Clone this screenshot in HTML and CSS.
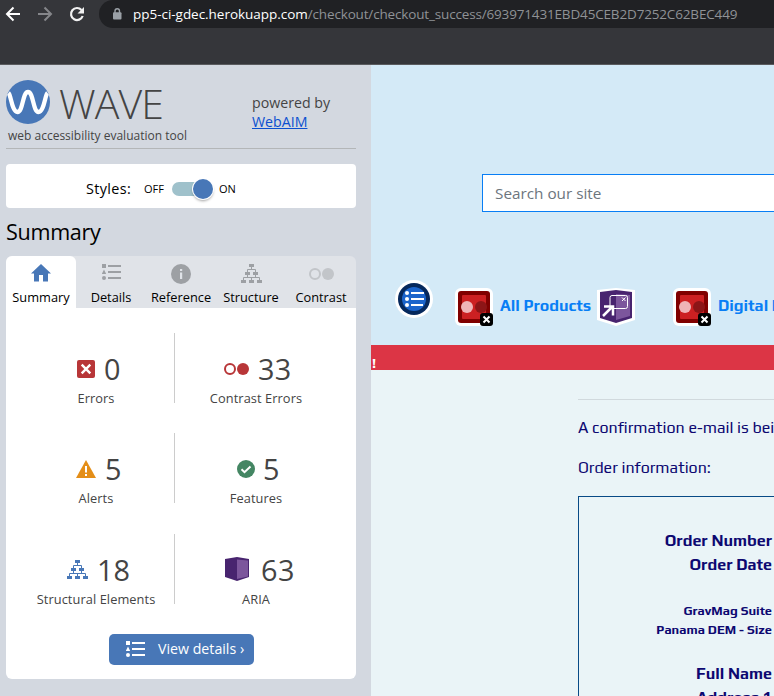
FILE: index.html
```html
<!DOCTYPE html>
<html lang="en">
<head>
<meta charset="utf-8">
<title>Checkout success - WAVE</title>
<link rel="stylesheet" href="styles.css">
</head>
<body>
<svg class="defs" aria-hidden="true">
  <defs>
    <symbol id="tree" viewBox="0 0 21 19">
      <path fill="currentColor" d="M8 0h5v3H8zM4 8h5v3H4zM12 8h5v3h-5zM0 16h5v3H0zM8 16h5v3H8zM16 16h5v3h-5z"/>
      <path fill="none" stroke="currentColor" d="M10.500 3v2.500M6.500 8V5.500h8V8M6.500 11v2.500M14.500 11v2.500M2.500 16v-2.500h16V16M10.500 13.500V16"/>
    </symbol>
    <symbol id="list" viewBox="0 0 19 16">
      <path fill="currentColor" d="M0 0h4v4H0zM2 5.500l2.200 4.500h-4.400zM6 1h13v2H6zM6 7h13v2H6zM6 13h13v2H6z"/>
      <circle cx="2" cy="14" r="2" fill="currentColor"/>
    </symbol>
    <symbol id="contrast" viewBox="0 0 26 12">
      <circle cx="6" cy="6" r="5" fill="none" stroke="currentColor" stroke-width="2"/>
      <circle cx="19" cy="6" r="6" fill="currentColor"/>
    </symbol>
    <symbol id="contrast-flag" viewBox="0 0 38 38">
      <rect width="38" height="38" rx="6" fill="#fff"/>
      <rect x="3" y="3" width="32" height="32" rx="3" fill="#800000"/>
      <rect x="7" y="7" width="24" height="24" rx="1" fill="#cc2022"/>
      <circle cx="12" cy="19" r="6" fill="#efb4b7"/>
      <circle cx="26" cy="19" r="6" fill="#8c1517"/>
      <rect x="25" y="25" width="13" height="13" rx="3" fill="#000"/>
      <path d="M28.500 28.500l6 6M34.500 28.500l-6 6" stroke="#fff" stroke-width="2"/>
    </symbol>
  </defs>
</svg>
<header class="toolbar">
  <svg class="nav" viewBox="0 0 100 28" fill="none" stroke-width="2">
    <path stroke="#fff" d="M20 14H7.500M13.500 7.500L7 14l6.500 6.500"/>
    <path stroke="#85868a" d="M38 14h12.500M44.500 7.500L51 14l-6.500 6.500"/>
    <path stroke="#f1f1f1" stroke-width="2.200" d="M81.500 10A6 6 0 1 0 82.700 16"/>
    <path fill="#f1f1f1" d="M84 7v6.500h-6.500z"/>
  </svg>
  <div class="address">
    <svg class="lock" viewBox="0 0 10 12"><rect x="1" y="4.200" width="8.500" height="7.300" rx="1" fill="#9aa0a6"/><path d="M3 5V3a2.200 2.200 0 0 1 4.500 0v2" fill="none" stroke="#9aa0a6" stroke-width="1.400"/></svg>
    <span class="host">pp5-ci-gdec.herokuapp.com</span><span class="path">/checkout/checkout_success/693971431EBD45CEB2D7252C62BEC449</span>
  </div>
</header>
<div class="window">
  <aside class="wave">
    <div class="brand">
      <div class="brand-main">
        <div class="logo">
          <svg width="44" height="44" viewBox="0 0 44 44"><circle cx="22" cy="22" r="22" fill="#4877b7"/><path d="M2.500 13C5 15 6 32 11.500 32C17 32 16.500 12 22 12S27 32 32.500 32C38 32 39 15 41.500 13" fill="none" stroke="#fff" stroke-width="4.300"/></svg>
          <span class="logo-text">WAVE</span>
        </div>
        <div class="tagline">web accessibility evaluation tool</div>
      </div>
      <div class="powered">powered by<br><a>WebAIM</a></div>
    </div>
    <div class="styles-card">
      <span class="styles-label">Styles:</span><span class="off">OFF</span><span class="track"><span class="knob"></span></span><span class="on">ON</span>
    </div>
    <h2>Summary</h2>
    <nav class="tabs">
      <div class="tab active"><svg width="20" height="18" viewBox="0 0 20 18"><path fill="currentColor" d="M10 0l10 9.500h-3V17.500h-5V11H8v6.500H3v-8H0z"/></svg><span>Summary</span></div>
      <div class="tab"><svg width="19" height="16"><use href="#list"/></svg><span>Details</span></div>
      <div class="tab ref"><svg width="20" height="20" viewBox="0 0 20 20"><circle cx="10" cy="10" r="10" fill="currentColor"/><path fill="#e0e3e8" d="M9 5h2.200v2H9zM9 8.500h2.200V15H9z"/></svg><span>Reference</span></div>
      <div class="tab"><svg width="21" height="19"><use href="#tree"/></svg><span>Structure</span></div>
      <div class="tab pale"><svg width="26" height="12"><use href="#contrast"/></svg><span>Contrast</span></div>
    </nav>
    <section class="panel">
      <div class="counts">
        <div class="count left"><div class="num"><svg class="i-error" width="18" height="18" viewBox="0 0 18 18"><rect width="18" height="18" rx="2" fill="#b83638"/><path d="M4.700 4.700l8.600 8.600M13.300 4.700l-8.600 8.600" stroke="#fff" stroke-width="2.400"/></svg><span>0</span></div><div class="label">Errors</div></div>
        <div class="count right"><div class="num"><svg class="red" width="26" height="12"><use href="#contrast"/></svg><span>33</span></div><div class="label">Contrast Errors</div></div>
        <div class="count left"><div class="num"><svg class="i-alert" width="20" height="18" viewBox="0 0 20 18"><path fill="#e48e18" d="M10 0l10 18H0z"/><path d="M9 6h2v6.500H9zM9 14h2v2H9z" fill="#fff"/></svg><span>5</span></div><div class="label">Alerts</div></div>
        <div class="count right"><div class="num"><svg class="i-feature" width="18" height="18" viewBox="0 0 18 18"><circle cx="9" cy="9" r="9" fill="#448663"/><path d="M4.500 9.300l3 2.900 6-5.700" fill="none" stroke="#fff" stroke-width="2"/></svg><span>5</span></div><div class="label">Features</div></div>
        <div class="count left"><div class="num"><svg class="blue" width="21" height="19"><use href="#tree"/></svg><span>18</span></div><div class="label">Structural Elements</div></div>
        <div class="count right"><div class="num"><svg class="i-aria" width="24" height="24" viewBox="0 0 24 24"><path fill="#48246f" d="M0 2L12 0l12 2v18l-12 4-12-4z"/><path fill="#7c569c" d="M12 2.500L23 3.500v16L12 22z"/></svg><span>63</span></div><div class="label">ARIA</div></div>
      </div>
      <div class="details-button"><svg width="19" height="16"><use href="#list"/></svg><span>View details ›</span></div>
    </section>
  </aside>
  <main class="site">
    <div class="masthead">
      <div class="search">Search our site</div>
      <div class="menu">
        <svg class="list-flag" width="38" height="38" viewBox="0 0 38 38"><circle cx="19" cy="19" r="19" fill="#fff"/><circle cx="19" cy="19" r="16" fill="#05285c"/><circle cx="19" cy="19" r="12" fill="#1b64cb"/><g fill="#fff"><circle cx="12" cy="13" r="2"/><circle cx="12" cy="19" r="2"/><circle cx="12" cy="25" r="2"/><path d="M16 12h13v2H16zM16 18h13v2H16zM16 24h12v2H16z"/></g></svg>
        <svg class="flag" width="38" height="38"><use href="#contrast-flag"/></svg>
        <span class="menu-link products">All Products</span>
        <svg class="aria-flag" width="38" height="38" viewBox="0 0 38 38"><path fill="#fff" d="M0 2L19 0l19 2v30l-19 6-19-6z"/><path fill="#48246f" d="M3 4l16-2 16 2v26l-16 5-16-5z"/><path fill="#7c569c" d="M19 6l14 1v21l-14 4z"/><rect x="13" y="7.500" width="17.500" height="13" rx="2" fill="none" stroke="#fff"/><path fill="none" stroke="#fff" d="M25 9.500l3.500 3.500M28.500 9.500L25 13"/><path fill="none" stroke="#fff" stroke-width="2.500" d="M6 28l9-9M7 18.500h9v9"/></svg>
        <svg class="flag second" width="38" height="38"><use href="#contrast-flag"/></svg>
        <span class="menu-link digital">Digital Products</span>
      </div>
    </div>
    <div class="banner">!</div>
    <div class="content">
      <hr>
      <p class="confirm">A confirmation e-mail is being sent</p>
      <p class="info">Order information:</p>
      <div class="order">
        <div class="row">Order Number</div>
        <div class="row">Order Date</div>
        <div class="row small first">GravMag Suite</div>
        <div class="row small">Panama DEM - Size</div>
        <div class="row name">Full Name</div>
        <div class="row">Address 1</div>
      </div>
    </div>
  </main>
</div>
</body>
</html>
```

FILE: styles.css
```css
* { box-sizing: border-box; }
body { margin: 0; width: 774px; height: 696px; overflow: hidden; font-family: "Open Sans", sans-serif; background: #d3d8e0; }
svg { display: block; flex: none; }
.defs { position: absolute; width: 0; height: 0; }

.toolbar { height: 65px; background: #35363a; border-bottom: 1px solid #5a5b5e; display: flex; align-items: flex-start; }
.nav { width: 100px; height: 28px; }
.address { flex: 1; margin-left: -1px; height: 28px; background: #202124; border-radius: 14px 0 0 14px; display: flex; align-items: center; font-size: 13.500px; color: #8f9296; white-space: nowrap; padding-left: 13px; }
.lock { width: 10px; height: 12px; margin-right: 11px; }
.host { color: #fff; letter-spacing: -0.030px; }
.path { letter-spacing: -0.160px; }

.window { display: flex; height: 631px; }
.wave { width: 371px; flex: none; padding: 15px 15px 0 6px; color: #444; }
.brand { height: 69px; border-bottom: 1px solid #b3b6b8; display: flex; }
.brand-main { width: 246px; }
.logo { display: flex; height: 44px; }
.logo-text { font-size: 41px; font-weight: 300; line-height: 44px; margin-left: 9px; padding-top: 1px; letter-spacing: -0.900px; }
.tagline { font-size: 12px; line-height: 16px; margin: 4px 0 0 2px; white-space: nowrap; }
.powered { font-size: 14.200px; line-height: 19px; padding-top: 13px; white-space: nowrap; }
.powered a { color: #0b50d0; text-decoration: underline; }
.styles-card { margin-top: 15px; height: 44px; border-radius: 4px; background: #fff; color: #000; display: flex; align-items: center; padding: 5px 0 0 80px; font-size: 11px; }
.styles-label { font-size: 14.400px; width: 58px; letter-spacing: 0.350px; }
.off { width: 28px; }
.track { width: 41px; height: 14px; border-radius: 7px; background: #9fc1cb; display: flex; justify-content: flex-end; align-items: center; }
.knob { width: 20px; height: 20px; flex: none; border-radius: 50%; background: #4877b7; box-shadow: 0 0 0 1px #fff, 0 2px 3px #0006; }
.on { margin-left: 6px; }
h2 { margin: 8px 0 0; color: #000; font-size: 21.600px; font-weight: 400; line-height: 32px; height: 40px; letter-spacing: -0.300px; }
.tabs { height: 52px; background: #e0e3e8; border-radius: 6px 6px 0 0; display: flex; }
.tab { width: 70px; height: 52px; color: #9da0a4; display: flex; flex-direction: column; align-items: center; padding-top: 8px; border-radius: 6px 6px 0 0; }
.tab span { color: #000; font-size: 12.800px; line-height: 18px; margin-top: auto; margin-bottom: 2px; }
.tab.active { background: #fff; color: #4877b7; }
.tab.pale { color: #c2c5c9; padding-top: 12px; }
.tab.pale svg { margin-left: 2px; }
.panel { height: 371px; background: #fff; border-radius: 0 0 6px 6px; padding-top: 25px; }
.counts { display: grid; grid-template-columns: 169px 1fr; grid-auto-rows: 70px; row-gap: 30.300px; }
.count { padding-top: 19px; text-align: center; }
.count.left { border-right: 1px solid #ccc; }
.count.left .label { width: 180px; }
.count.right .label { width: 162px; }
.num { display: flex; align-items: center; height: 34px; font-size: 28.800px; line-height: 34px; }
.num span { margin-left: 9px; }
.label { font-size: 12.800px; line-height: 18px; margin-top: 3px; letter-spacing: 0.080px; }
.i-error { margin-left: 71px; }
.i-alert { margin-left: 70px; }
.blue { margin-left: 61px; color: #4877b7; }
.red { margin-left: 49px; color: #b83638; }
.num .red + span { margin-left: 8px; letter-spacing: 0.300px; }
.i-feature { margin-left: 62px; }
.num .i-feature + span { margin-left: 8px; }
.i-aria { margin-left: 50px; margin-top: -2px; }
.num .i-aria + span { margin-left: 12px; letter-spacing: 0.500px; }
.details-button { width: 145px; height: 31px; margin: 30px 0 0 103px; border-radius: 5px; background: #4877b7; color: #fff; display: flex; align-items: center; padding-left: 17px; font-size: 14.200px; white-space: nowrap; }
.details-button span { margin-left: 13px; margin-top: -2px; }

.site { width: 403px; overflow: hidden; font-family: Play, "Exo 2", Roboto, sans-serif; background: #eaf4f7; color: #0d0871; }
.masthead { height: 280px; background: #d4eaf7; padding-top: 109px; }
.search { margin-left: 111px; width: 400px; height: 38px; border: 1px solid #087ef5; background: #fff; padding: 0 12px; font: 15.300px/36px "Open Sans", sans-serif; color: #6c757d; }
.menu { display: flex; align-items: center; margin-top: 65px; height: 52px; width: 600px; }
.list-flag { margin: -8px 0 0 24px; }
.flag { margin: 8px 0 0 22px; }
.menu-link { color: #087ef5; font-weight: 700; font-size: 16px; line-height: 24px; white-space: nowrap; margin: 5px 0 0 7px; }
.products { width: 91px; }
.aria-flag { margin: 8px 0 0 6px; }
.flag.second { margin-left: 38px; }
.banner { height: 25px; background: #dc3545; color: #fff; font-size: 14px; font-weight: 700; line-height: 37px; padding-left: 1px; overflow: hidden; }
.content { padding-left: 207px; width: 850px; white-space: nowrap; }
.content hr { border: 0; height: 1px; background: #d1d9dd; margin: 29px 0 16px; }
.content p { margin: 0 0 16px; font-size: 16px; line-height: 24px; }
.order { border: 1px solid #084a86; height: 400px; padding-top: 32px; }
.row { width: 193px; text-align: right; font-size: 16px; line-height: 24px; font-weight: 700; }
.row.small { font-size: 12.800px; line-height: 19px; }
.row.first { margin-top: 24px; }
.row.name { margin-top: 23px; }
```
